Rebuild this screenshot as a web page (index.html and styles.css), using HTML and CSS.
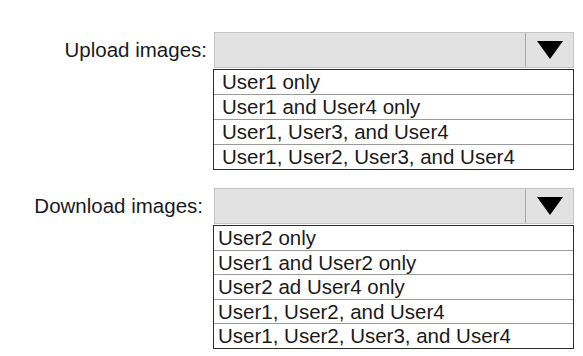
FILE: index.html
```html
<!DOCTYPE html>
<html lang="en">
<head>
  <meta charset="UTF-8">
  <meta name="viewport" content="width=device-width, initial-scale=1.0">
  <title>Image permissions</title>
  <link rel="stylesheet" href="styles.css">
</head>
<body>

  <div class="answer-area">
    <div class="field">
      <div class="label">Upload images:</div>
      <div class="dropdown">
        <div class="select">
          <div class="value"></div>
          <div class="arrow">
            <svg width="26" height="18" viewBox="0 0 26 18"><polygon points="0,0 26,0 13,18" fill="#000"/></svg>
          </div>
        </div>
        <ul class="options">
          <li>User1 only</li>
          <li>User1 and User4 only</li>
          <li>User1, User3, and User4</li>
          <li>User1, User2, User3, and User4</li>
        </ul>
      </div>
    </div>

    <div class="field">
      <div class="label shifted">Download images:</div>
      <div class="dropdown">
        <div class="select">
          <div class="value"></div>
          <div class="arrow">
            <svg width="26" height="18" viewBox="0 0 26 18"><polygon points="0,0 26,0 13,18" fill="#000"/></svg>
          </div>
        </div>
        <ul class="options tight">
          <li>User2 only</li>
          <li>User1 and User2 only</li>
          <li>User2 ad User4 only</li>
          <li>User1, User2, and User4</li>
          <li>User1, User2, User3, and User4</li>
        </ul>
      </div>
    </div>
  </div>

</body>
</html>
```

FILE: styles.css
```css
body {
  margin: 0;
  background-color: #ffffff;
  font-family: "Liberation Sans", Arial, sans-serif;
  font-size: 20.5px;
  color: #1a1a1a;
}
.answer-area {
  display: flex;
  flex-direction: column;
  gap: 18px;
  padding-top: 32px;
}
.field {
  display: flex;
  align-items: flex-start;
  gap: 6px;
}
.label {
  width: 207px;
  height: 36px;
  line-height: 36px;
  text-align: right;
}
.label.shifted {
  width: 203px;
  padding-right: 4px;
}
.dropdown {
  width: 361px;
}
.select {
  display: flex;
  height: 36px;
  margin-left: 1px;
  box-sizing: border-box;
  border: 1px solid #c4c4c4;
  background-color: #e2e2e2;
}
.value {
  flex: 1;
}
.arrow {
  width: 47px;
  display: flex;
  justify-content: center;
  align-items: center;
  border-left: 1px solid #a9a9a9;
}
.options {
  list-style: none;
  margin: 1px 0 0 0;
  padding: 0;
  border: 1px solid #2b2b2b;
}
.options li {
  height: 24px;
  line-height: 24px;
  padding-left: 8px;
  border-top: 1px solid #9a9a9a;
}
.options li:first-child {
  border-top: none;
}
.options.tight li {
  height: 23.4px;
  line-height: 23.4px;
  padding-left: 4px;
}
.options.tight li:first-child {
  height: 24px;
}
```
